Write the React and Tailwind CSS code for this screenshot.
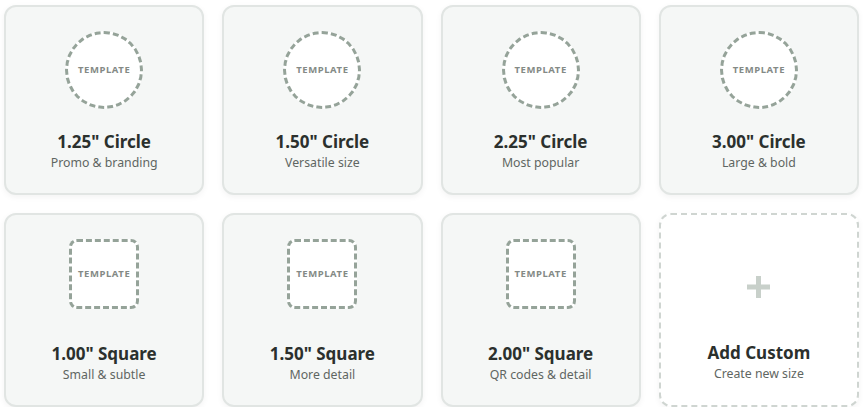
import React from "react";

const circles = [
  { t: '1.25" Circle', s: "Promo & branding" },
  { t: '1.50" Circle', s: "Versatile size" },
  { t: '2.25" Circle', s: "Most popular" },
  { t: '3.00" Circle', s: "Large & bold" },
];
const squares = [
  { t: '1.00" Square', s: "Small & subtle" },
  { t: '1.50" Square', s: "More detail" },
  { t: '2.00" Square', s: "QR codes & detail" },
];

function Card({ shape, t, s }) {
  return (
    <div className="flex flex-col items-center rounded-[12px] border-2 border-[#e1e5e3] bg-[#f5f7f6] pt-[24px] pb-[21px] shadow-[0_2px_6px_rgba(0,0,0,0.05)]">
      {shape === "circle" ? (
        <div className="flex h-[78px] w-[78px] items-center justify-center rounded-full border-[3px] border-dashed border-[#95a399] bg-white">
          <span className="text-[9.5px] font-bold tracking-[0.6px] text-[#848a86]">TEMPLATE</span>
        </div>
      ) : (
        <div className="flex h-[70px] w-[70px] items-center justify-center rounded-[8px] border-[3px] border-dashed border-[#95a399] bg-white">
          <span className="text-[9.5px] font-bold tracking-[0.6px] text-[#848a86]">TEMPLATE</span>
        </div>
      )}
      <div className="mt-auto flex flex-col items-center pt-[21px]">
        <div className="text-[17px] leading-[24px] font-bold text-[#2b302d]">{t}</div>
        <div className="text-[12.3px] leading-[18px] text-[#5f6662]">{s}</div>
      </div>
    </div>
  );
}

export default function App() {
  return (
    <div
      className="grid w-[863px] grid-cols-4 gap-[18px] px-[4px] pt-[5px] bg-white"
      style={{ fontFamily: '"Noto Sans", "Open Sans", sans-serif' }}
    >
      {circles.map((c) => (
        <Card key={c.t} shape="circle" {...c} />
      ))}
      {squares.map((c) => (
        <Card key={c.t} shape="square" {...c} />
      ))}
      <div className="flex flex-col items-center rounded-[12px] border-2 border-dashed border-[#cfd5d1] bg-white pt-[25px] pb-[22px] shadow-[0_2px_6px_rgba(0,0,0,0.05)]">
        <div className="flex h-[94px] w-full items-center justify-center">
          <svg width="23" height="22" viewBox="0 0 23 22">
            <rect x="9" y="0" width="5" height="22" fill="#c8d0ca" />
            <rect x="0" y="8.5" width="23" height="5" fill="#c8d0ca" />
          </svg>
        </div>
        <div className="mt-[7px] flex flex-col items-center">
          <div className="text-[17px] leading-[24px] font-bold text-[#2b302d]">Add Custom</div>
          <div className="text-[12.3px] leading-[18px] text-[#5f6662]">Create new size</div>
        </div>
      </div>
    </div>
  );
}
